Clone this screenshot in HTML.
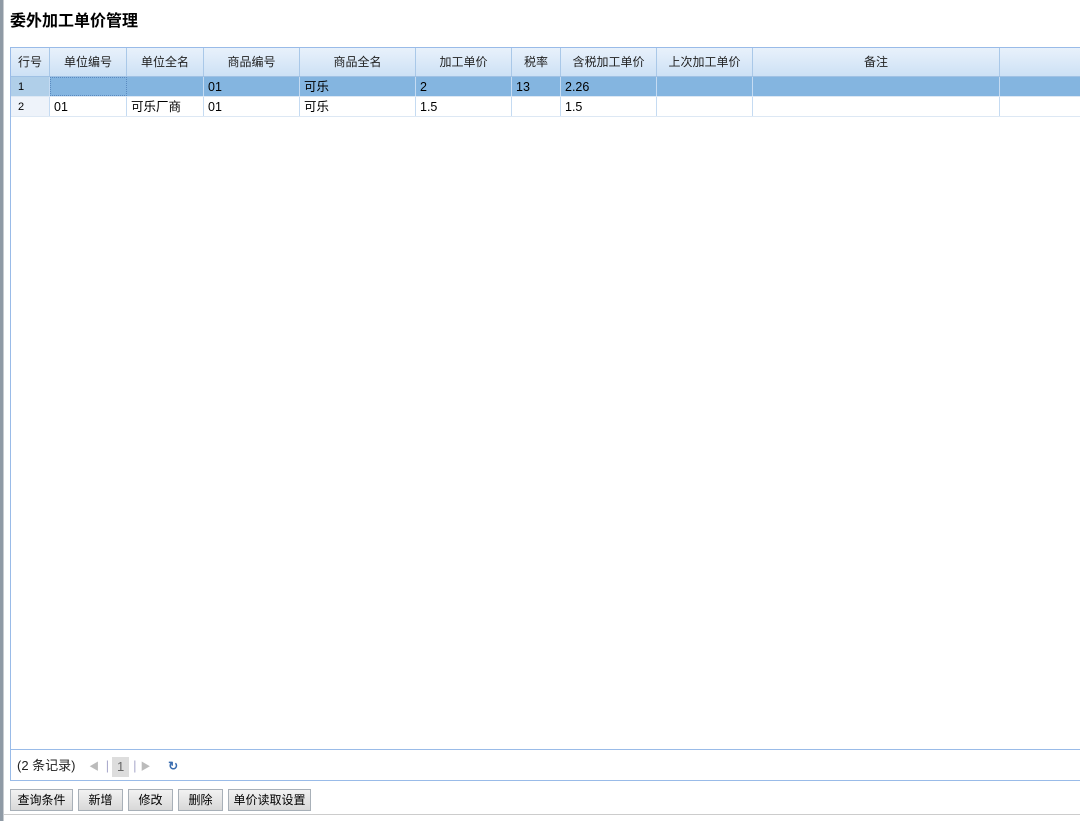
<!DOCTYPE html>
<html><head><meta charset="utf-8"><style>
*{box-sizing:border-box;margin:0;padding:0}
body{width:1080px;height:821px;background:#fff;font-family:"Liberation Sans","Noto Sans CJK SC",sans-serif;font-size:12px;color:#000;position:relative;overflow:hidden}
.strip{position:absolute;left:0;top:0;width:4px;height:821px;background:#8f9aa5;border-right:1px solid #c8ccd0}
.title{position:absolute;left:10px;top:7px;font-size:16px;font-weight:bold}
.grid{position:absolute;left:10px;top:47px;width:1075px;height:734px;border:1px solid #99bbe8;border-right:none}
.c{position:absolute;height:100%;top:0;border-right:1px solid #c5dbf2;padding-left:4px;white-space:nowrap;overflow:hidden}
.hdr{position:absolute;left:0;top:0;height:29px;width:100%;background:linear-gradient(#e8f1fb,#cde1f5);border-bottom:1px solid #9fc1e4}
.hdr .c{text-align:center;padding:0;line-height:29px;border-right:1px solid #a9c8e8;color:#222}
.row{position:absolute;left:0;height:20px;width:100%;line-height:20px;border-bottom:1px solid #dde8f4;font-size:12.5px}
.r1{top:29px;background:#84b5e0}
.r2{top:49px;background:#fff}
.rn{background:#eef3fa;padding-left:7px!important;font-size:11px}
.r1 .rn{background:#b0cfe9}
.pager{position:absolute;left:0;top:701px;width:100%;height:32px;border-top:1px solid #99bbe8;line-height:32px;padding-left:6px;font-size:13px;color:#222}
.btn{position:absolute;top:789px;height:22px;border:1px solid #a8b0b8;background:linear-gradient(#f2f2f2,#d8d8d8);font-size:12px;line-height:20px;text-align:center}
.bot{position:absolute;left:4px;top:814px;width:1076px;border-top:1px solid #ccc}
</style></head><body>
<div class="strip"></div>
<div class="title">委外加工单价管理</div>
<div class="grid">
<div class="hdr">
<div class="c" style="left:0;width:39px">行号</div>
<div class="c" style="left:39px;width:77px">单位编号</div>
<div class="c" style="left:116px;width:77px">单位全名</div>
<div class="c" style="left:193px;width:96px">商品编号</div>
<div class="c" style="left:289px;width:116px">商品全名</div>
<div class="c" style="left:405px;width:96px">加工单价</div>
<div class="c" style="left:501px;width:49px">税率</div>
<div class="c" style="left:550px;width:96px">含税加工单价</div>
<div class="c" style="left:646px;width:96px">上次加工单价</div>
<div class="c" style="left:742px;width:247px">备注</div>
</div>
<div class="row r1">
<div class="c rn" style="left:0;width:39px">1</div>
<div class="c" style="left:39px;width:77px;border:1px dotted #5a8ac0"></div>
<div class="c" style="left:116px;width:77px"></div>
<div class="c" style="left:193px;width:96px">01</div>
<div class="c" style="left:289px;width:116px">可乐</div>
<div class="c" style="left:405px;width:96px">2</div>
<div class="c" style="left:501px;width:49px">13</div>
<div class="c" style="left:550px;width:96px">2.26</div>
<div class="c" style="left:646px;width:96px"></div>
<div class="c" style="left:742px;width:247px"></div>
</div>
<div class="row r2">
<div class="c rn" style="left:0;width:39px">2</div>
<div class="c" style="left:39px;width:77px">01</div>
<div class="c" style="left:116px;width:77px">可乐厂商</div>
<div class="c" style="left:193px;width:96px">01</div>
<div class="c" style="left:289px;width:116px">可乐</div>
<div class="c" style="left:405px;width:96px">1.5</div>
<div class="c" style="left:501px;width:49px"></div>
<div class="c" style="left:550px;width:96px">1.5</div>
<div class="c" style="left:646px;width:96px"></div>
<div class="c" style="left:742px;width:247px"></div>
</div>
<div class="pager">(2 条记录) <span style="color:#bbb;margin-left:10px;font-size:10px">◀</span> <span style="color:#aac;margin:0 3px">|</span><span style="display:inline-block;width:17px;height:20px;line-height:20px;background:#ddd;text-align:center;color:#666;vertical-align:middle">1</span><span style="color:#aac;margin:0 4px">|</span><span style="color:#bbb;font-size:10px">▶</span> <span style="color:#3a6db0;font-weight:bold;margin-left:14px;font-size:12px">↻</span></div>
</div>
<div class="btn" style="left:10px;width:63px">查询条件</div>
<div class="btn" style="left:78px;width:45px">新增</div>
<div class="btn" style="left:128px;width:45px">修改</div>
<div class="btn" style="left:178px;width:45px">删除</div>
<div class="btn" style="left:228px;width:83px">单价读取设置</div>
<div class="bot"></div>
</body></html>
